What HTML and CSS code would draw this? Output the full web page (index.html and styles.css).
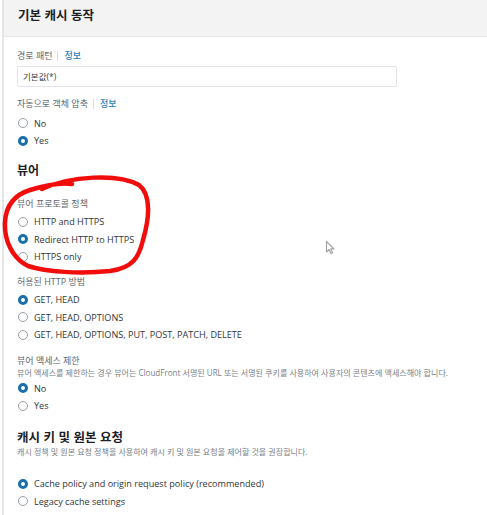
FILE: index.html
```html
<!DOCTYPE html>
<html lang="ko">
<head>
<meta charset="utf-8">
<title>기본 캐시 동작</title>
<link rel="stylesheet" href="styles.css">
</head>
<body>
<div class="panel">
  <div class="header"><h2 class="title">기본 캐시 동작</h2></div>
  <div class="content">
    <div class="label f-path">경로 패턴<span class="sep"></span><span class="info">정보</span></div>
    <div class="input">기본값(*)</div>

    <div class="label f-compress">자동으로 객체 압축<span class="sep"></span><span class="info">정보</span></div>
    <div class="radios g-compress">
      <div class="radio"><span class="dot"></span>No</div>
      <div class="radio"><span class="dot on"></span>Yes</div>
    </div>

    <h3 class="section s-viewer">뷰어</h3>

    <div class="label f-protocol">뷰어 프로토콜 정책</div>
    <div class="radios g-tight">
      <div class="radio"><span class="dot"></span>HTTP and HTTPS</div>
      <div class="radio"><span class="dot on"></span>Redirect HTTP to HTTPS</div>
      <div class="radio"><span class="dot"></span>HTTPS only</div>
    </div>

    <div class="label f-methods">허용된 HTTP 방법</div>
    <div class="radios g-tight">
      <div class="radio"><span class="dot on"></span>GET, HEAD</div>
      <div class="radio"><span class="dot"></span>GET, HEAD, OPTIONS</div>
      <div class="radio"><span class="dot"></span>GET, HEAD, OPTIONS, PUT, POST, PATCH, DELETE</div>
    </div>

    <div class="label f-access">뷰어 액세스 제한</div>
    <div class="desc">뷰어 액세스를 제한하는 경우 뷰어는 CloudFront 서명된 URL 또는 서명된 쿠키를 사용하여 사용자의 콘텐츠에 액세스해야 합니다.</div>
    <div class="radios g-access">
      <div class="radio"><span class="dot on"></span>No</div>
      <div class="radio"><span class="dot"></span>Yes</div>
    </div>

    <h3 class="section s-cache">캐시 키 및 원본 요청</h3>
    <div class="desc d-cache">캐시 정책 및 원본 요청 정책을 사용하여 캐시 키 및 원본 요청을 제어할 것을 권장합니다.</div>
    <div class="radios g-cache">
      <div class="radio"><span class="dot on"></span>Cache policy and origin request policy (recommended)</div>
      <div class="radio"><span class="dot"></span>Legacy cache settings</div>
    </div>
  </div>
</div>

<svg class="annotation" width="487" height="515" viewBox="0 0 487 515" aria-hidden="true">
  <path d="M 42 189 C 70 176, 118 173, 139 185 C 152 195, 149 220, 143 240 C 139 257, 133 268, 110 271 C 80 274, 46 272, 28 266 C 12 258, 4 240, 5 222 C 6 205, 14 195, 30 190 C 46 185, 60 182, 72 184" fill="none" stroke="#f20d0d" stroke-width="4.5" stroke-linecap="round" stroke-linejoin="round"/>
</svg>

<svg class="cursor" width="12" height="15" viewBox="0 0 12 15" aria-hidden="true">
  <path d="M1.5 1.5 L1.5 12 L4 9.5 L6 13.5 L7.6 12.7 L5.7 8.9 L9 8.9 Z" fill="#fff" stroke="#a5a5a5" stroke-width="1.2" stroke-linejoin="round"/>
</svg>
</body>
</html>
```

FILE: styles.css
```css
* { box-sizing: border-box; }

html, body {
  margin: 0;
  padding: 0;
  background: #ffffff;
}

body {
  width: 487px;
  height: 515px;
  overflow: hidden;
  position: relative;
  font-family: "Open Sans", "Noto Sans CJK KR", sans-serif;
  color: #2f3337;
}

.panel {
  margin-left: 2px;
  border-left: 2px solid #e3e5e6;
  height: 515px;
}

.header {
  height: 37px;
  background: #f3f3f3;
  border-bottom: 1px solid #e6e7e8;
  padding: 6px 0 0 14px;
}

.title {
  margin: 0;
  font-family: "Noto Sans CJK KR", sans-serif;
  font-size: 12.5px;
  line-height: 17px;
  font-weight: 700;
  color: #1d2125;
}

.content {
  padding: 0 12px 0 13px;
}

.label {
  display: flex;
  align-items: center;
  font-size: 9px;
  line-height: 12px;
  color: #5f666d;
}

.sep {
  width: 1px;
  height: 10px;
  background: #dcdfe1;
  margin: 0 6px 0 5px;
}

.info {
  color: #2a7fb8;
  font-weight: 500;
}

.f-path { margin-top: 12.5px; }

.input {
  margin-top: 4.5px;
  width: 380px;
  height: 21px;
  border: 1px solid #e2e4e6;
  border-radius: 2px;
  padding-left: 5px;
  font-size: 8.5px;
  line-height: 19px;
  color: #3b4044;
}

.f-compress { margin-top: 11px; }
.f-protocol { margin-top: 20px; }
.f-methods { margin-top: 10.75px; }
.f-access { margin-top: 11.25px; }

.radios {
  display: flex;
  flex-direction: column;
}

.g-compress { margin-top: 4.25px; }
.g-tight { margin-top: 2.75px; }
.g-access { margin-top: 2px; }
.g-cache { margin-top: 18px; }

.radio {
  display: flex;
  align-items: center;
  height: 17.5px;
  font-size: 9.1px;
  color: #30353a;
  white-space: nowrap;
}

.dot {
  width: 10px;
  height: 10px;
  border-radius: 50%;
  border: 1px solid #9aa0a5;
  background: #fff;
  margin: 0 6px 0 1px;
  flex: none;
}

.dot.on {
  border: 3px solid #1a6fab;
}

.section {
  margin: 0;
  font-family: "Noto Sans CJK KR", sans-serif;
  font-weight: 700;
  font-size: 12px;
  line-height: 16px;
  color: #1d2125;
}

.s-viewer { margin-top: 12.75px; }
.s-cache { margin-top: 14.2px; font-size: 12.5px; }

.desc {
  font-size: 8.05px;
  line-height: 11px;
  color: #7a8086;
  white-space: nowrap;
}

.d-cache { margin-top: 1.5px; }

.annotation {
  position: absolute;
  left: 0;
  top: 0;
  pointer-events: none;
}

.cursor {
  position: absolute;
  left: 325px;
  top: 240px;
  pointer-events: none;
}
```
